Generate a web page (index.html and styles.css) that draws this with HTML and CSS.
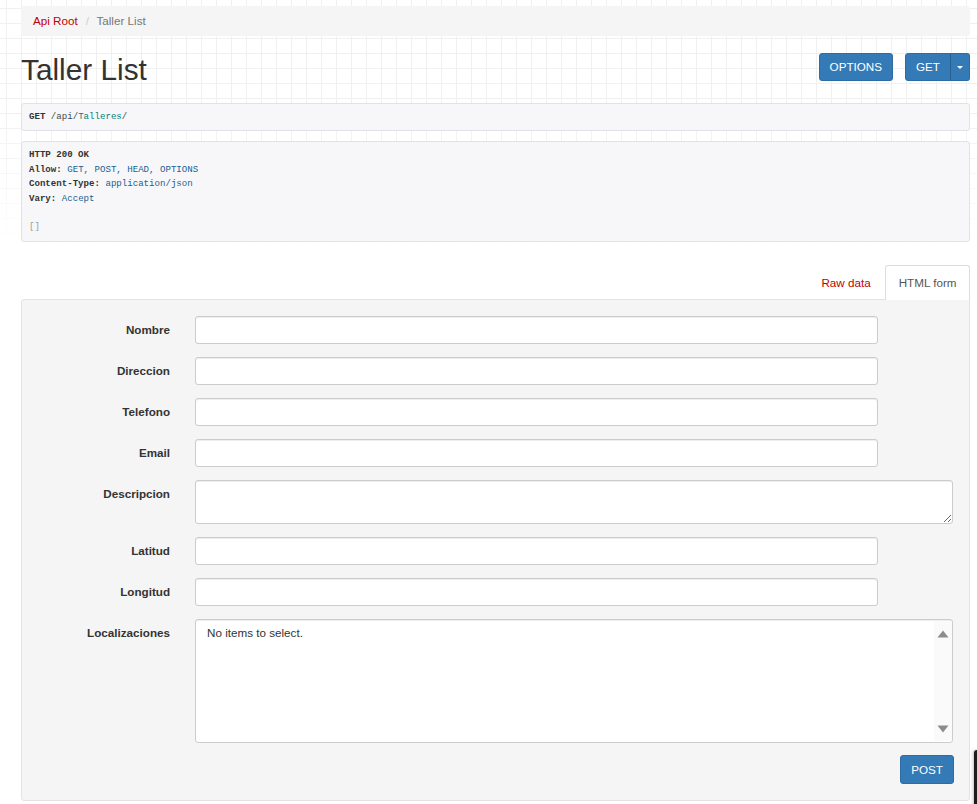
FILE: index.html
```html
<!DOCTYPE html>
<html lang="en">
<head>
<meta charset="utf-8">
<title>Taller List</title>
<link rel="stylesheet" href="styles.css">
</head>
<body>
<div class="page">
  <ul class="breadcrumb">
    <li><a href="#">Api Root</a></li>
    <li class="sep">/</li>
    <li class="active">Taller List</li>
  </ul>

  <div class="header">
    <h1>Taller List</h1>
    <div class="actions">
      <button class="btn">OPTIONS</button>
      <div class="btn-group">
        <button class="btn btn-left">GET</button>
        <button class="btn btn-caret"><span class="caret"></span></button>
      </div>
    </div>
  </div>

  <pre class="pp request"><b>GET</b> <span class="pln">/api/</span><span class="typ">Talleres</span><span class="pln">/</span></pre>
  <pre class="pp response"><b>HTTP 200 OK</b>
<b>Allow:</b> <span class="lit">GET, POST, HEAD, OPTIONS</span>
<b>Content-Type:</b> <span class="lit">application/json</span>
<b>Vary:</b> <span class="lit">Accept</span>

<span class="pun">[]</span></pre>

  <ul class="tabs">
    <li><a href="#" class="tab">Raw data</a></li>
    <li><a href="#" class="tab tab-active">HTML form</a></li>
  </ul>

  <div class="well">
    <form class="form">
      <div class="group">
        <label class="label">Nombre</label>
        <div class="field"><input class="input input-short" type="text"></div>
      </div>
      <div class="group">
        <label class="label">Direccion</label>
        <div class="field"><input class="input input-short" type="text"></div>
      </div>
      <div class="group">
        <label class="label">Telefono</label>
        <div class="field"><input class="input input-short" type="text"></div>
      </div>
      <div class="group">
        <label class="label">Email</label>
        <div class="field"><input class="input input-short" type="text"></div>
      </div>
      <div class="group">
        <label class="label">Descripcion</label>
        <div class="field"><textarea class="input textarea"></textarea></div>
      </div>
      <div class="group">
        <label class="label">Latitud</label>
        <div class="field"><input class="input input-short" type="text"></div>
      </div>
      <div class="group">
        <label class="label">Longitud</label>
        <div class="field"><input class="input input-short" type="text"></div>
      </div>
      <div class="group">
        <label class="label">Localizaciones</label>
        <div class="field">
          <div class="multiselect">
            <div class="options">No items to select.</div>
            <div class="scrollbar">
              <svg class="arrow" width="12" height="8" viewBox="0 0 12 8"><path d="M6 0.5 L11.5 7.5 L0.5 7.5 Z" fill="#8c8c8c"/></svg>
              <svg class="arrow" width="12" height="8" viewBox="0 0 12 8"><path d="M0.5 0.5 L11.5 0.5 L6 7.5 Z" fill="#8c8c8c"/></svg>
            </div>
          </div>
        </div>
      </div>
      <div class="form-actions">
        <button class="btn btn-post" type="button">POST</button>
      </div>
    </form>
  </div>
</div>
<div class="edge-widget"></div>
</body>
</html>
```

FILE: styles.css
```css
html, body {
  margin: 0;
  padding: 0;
}

body {
  position: relative;
  background: #fff;
  font-family: "Liberation Sans", Arial, sans-serif;
  font-size: 11.67px;
  line-height: 16.67px;
  color: #333;
  min-height: 804px;
  overflow: hidden;
}

body::before {
  content: "";
  position: absolute;
  left: 0;
  top: 0;
  width: 100%;
  height: 270px;
  background-image:
    linear-gradient(to right, #f0f0f0 1px, transparent 1px),
    linear-gradient(to bottom, #f0f0f0 1px, transparent 1px);
  background-size: 15px 15px;
  background-position: 6px 8px;
  -webkit-mask-image: linear-gradient(to bottom, #000 110px, transparent 250px);
  mask-image: linear-gradient(to bottom, #000 110px, transparent 250px);
  z-index: -1;
}

.page {
  padding: 6px 7px 0 21px;
}

a {
  color: #c20000;
  text-decoration: none;
}

/* breadcrumb */
.breadcrumb {
  list-style: none;
  margin: 0 0 17px;
  padding: 0 12px;
  height: 30px;
  display: flex;
  align-items: center;
  background: #f5f5f5;
  border-radius: 3px;
}

.breadcrumb .sep {
  color: #ccc;
  padding: 0 7.5px 0 8px;
}

.breadcrumb .active {
  color: #777;
}

/* header */
.header {
  display: flex;
  justify-content: space-between;
  align-items: flex-start;
}

.header h1 {
  margin: 0;
  font-size: 29.8px;
  line-height: 33px;
  font-weight: normal;
  color: #333;
}

.actions {
  display: flex;
  gap: 12px;
}

.btn-group {
  display: flex;
}

.btn {
  display: inline-flex;
  align-items: center;
  justify-content: center;
  height: 28px;
  padding: 0 10px;
  background: #337ab7;
  border: 1px solid #2e6da4;
  border-radius: 3px;
  color: #fff;
  font-family: "Liberation Sans", Arial, sans-serif;
  font-size: 11.67px;
  line-height: 16px;
  cursor: pointer;
}

.btn-left {
  border-top-right-radius: 0;
  border-bottom-right-radius: 0;
}

.btn-caret {
  width: 20px;
  padding: 0;
  margin-left: -1px;
  border-top-left-radius: 0;
  border-bottom-left-radius: 0;
  border-left-color: #286090;
}

.caret {
  display: block;
  width: 0;
  height: 0;
  border-top: 3.5px solid #fff;
  border-left: 3.5px solid transparent;
  border-right: 3.5px solid transparent;
}

/* pretty printed blocks */
.pp {
  margin: 0;
  padding: 6px 7px;
  background: #f7f7f9;
  border: 1px solid #e1e1e8;
  border-radius: 3px;
  font-family: "Liberation Mono", "DejaVu Sans Mono", monospace;
  font-size: 9.1px;
  line-height: 14.4px;
  color: #48484c;
  white-space: pre;
}

.pp b {
  color: #333;
}

.request {
  margin-top: 17px;
}

.response {
  margin-top: 10px;
}

.pln { color: #48484c; }
.typ { color: #008080; }
.lit { color: #195f91; }
.pun { color: #93a1a1; }

/* tabs */
.tabs {
  list-style: none;
  margin: 23.2px 0 -1px;
  padding: 0;
  display: flex;
  justify-content: flex-end;
  position: relative;
  z-index: 1;
}

.tab {
  display: flex;
  align-items: center;
  height: 34px;
  padding: 0 12.5px;
  margin-right: 1px;
  border: 1px solid transparent;
  border-bottom: 0;
  border-radius: 3px 3px 0 0;
  color: #c20000;
}

.tab-active {
  margin-right: 0;
  background: #fff;
  border-color: #ddd;
  color: #555;
}

/* well / form */
.well {
  background: #f5f5f5;
  border: 1px solid #e3e3e3;
  border-radius: 3px 0 3px 3px;
  padding: 16px;
}

.form {
  margin: 0;
}

.group {
  display: grid;
  grid-template-columns: 132px 1fr;
  column-gap: 25px;
  margin-bottom: 13px;
}

.label {
  font-weight: bold;
  text-align: right;
  padding-top: 6px;
  line-height: 16.67px;
  color: #333;
}

.field {
  min-width: 0;
}

.input {
  display: block;
  box-sizing: border-box;
  height: 28px;
  margin: 0;
  padding: 5px 10px;
  background: #fff;
  border: 1px solid #ccc;
  border-radius: 3px;
  box-shadow: inset 0 1px 1px rgba(0, 0, 0, 0.075);
  font-family: "Liberation Sans", Arial, sans-serif;
  font-size: 11.67px;
  color: #555;
}

.input-short {
  width: 683px;
}

.textarea {
  width: 100%;
  height: 44px;
  resize: both;
}

.multiselect {
  box-sizing: border-box;
  height: 124px;
  display: flex;
  background: #fff;
  border: 1px solid #ccc;
  border-radius: 3px;
  box-shadow: inset 0 1px 1px rgba(0, 0, 0, 0.075);
}

.options {
  flex: 1;
  padding: 6px 11px;
  line-height: 14px;
  color: #333;
}

.scrollbar {
  width: 18px;
  margin: 1px 0 1px 0;
  background: #fafafa;
  display: flex;
  flex-direction: column;
  justify-content: space-between;
  align-items: center;
  padding: 9px 0 8px;
  border-radius: 0 2px 2px 0;
}

.arrow {
  display: block;
}

.form-actions {
  display: flex;
  justify-content: flex-end;
  margin-top: -1px;
}

.btn-post {
  height: 29px;
  margin-right: -1px;
}

/* dark sliver at the bottom right edge of the window */
.edge-widget {
  position: absolute;
  left: 974px;
  top: 750px;
  width: 4px;
  height: 60px;
  background: #1d1d1d;
  border-radius: 3px 0 0 0;
  box-shadow: -1px 0 3px rgba(0, 0, 0, 0.25);
}
```
